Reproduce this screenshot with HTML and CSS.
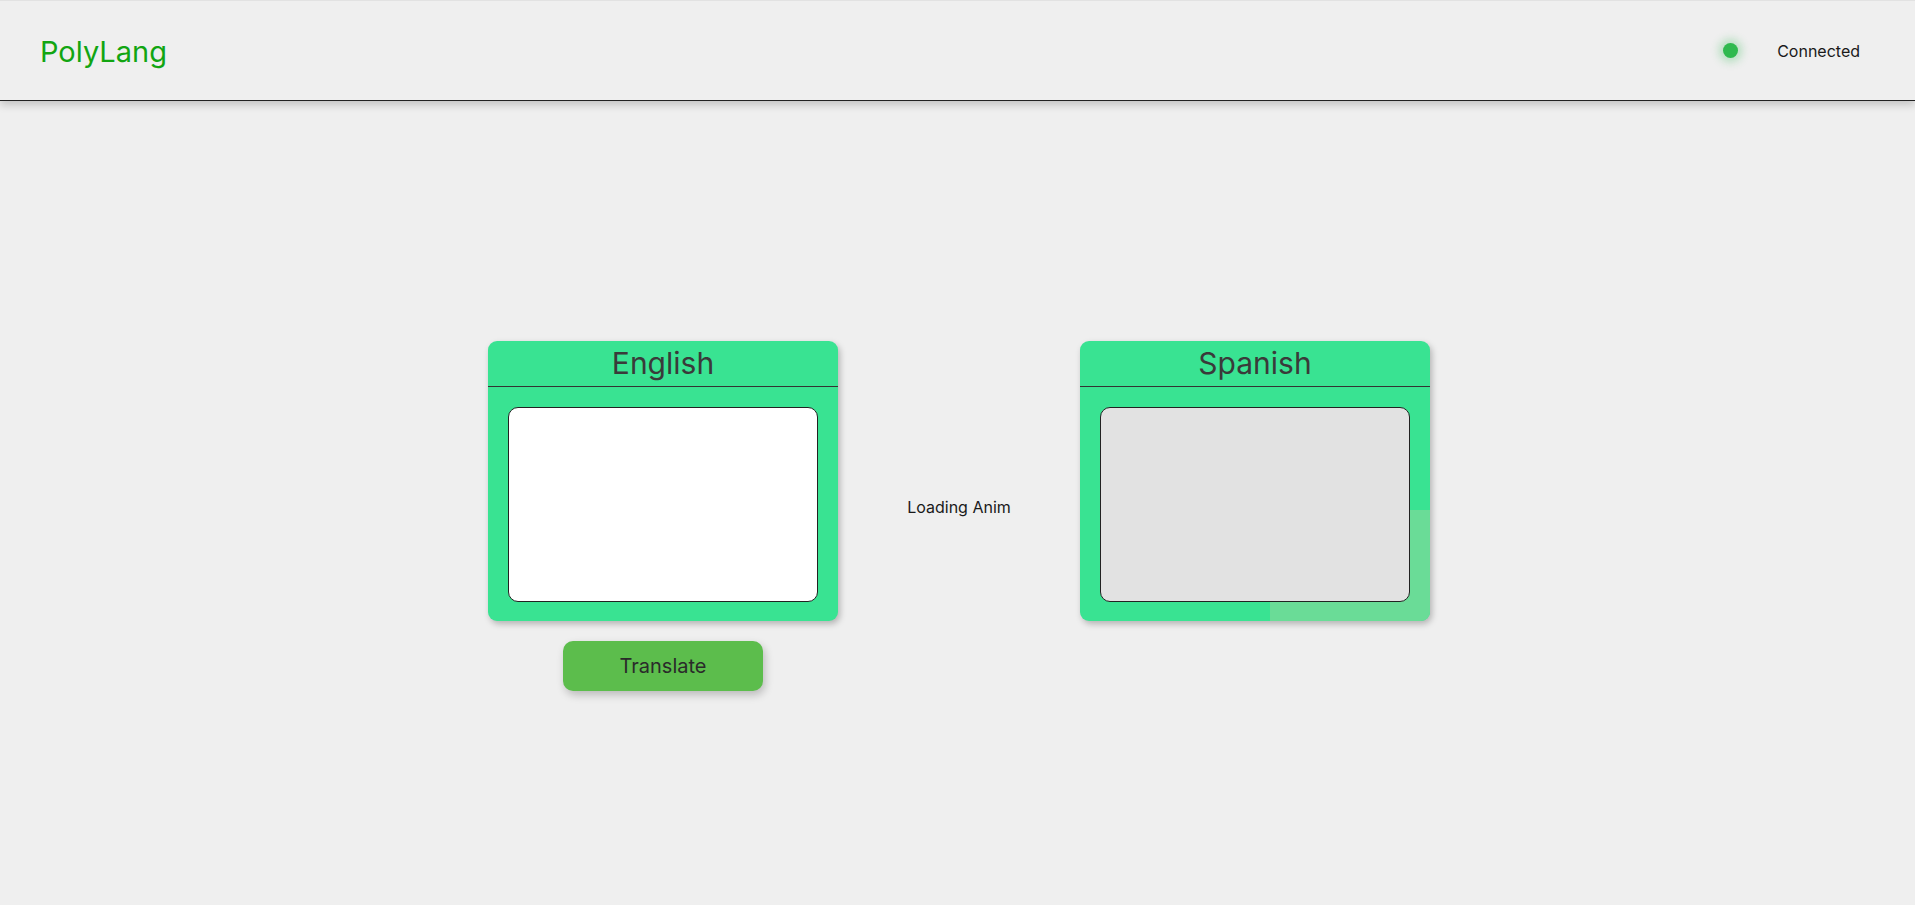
FILE: index.html
```html
<!DOCTYPE html>
<html lang="en">
<head>
<meta charset="utf-8">
<title>PolyLang</title>
<link rel="stylesheet" href="styles.css">
</head>
<body>
<header class="topbar">
  <div class="brand">PolyLang</div>
  <div class="status">
    <span class="status__dot"></span>
    <span class="status__label">Connected</span>
  </div>
</header>
<main class="stage">
  <div class="workspace">
    <div class="column">
      <section class="panel">
        <div class="panel__head">English</div>
        <div class="panel__body">
          <textarea class="panel__input"></textarea>
        </div>
      </section>
      <button class="translate">Translate</button>
    </div>
    <div class="loading">Loading Anim</div>
    <div class="column">
      <section class="panel panel--output">
        <div class="panel__head">Spanish</div>
        <div class="panel__body">
          <span class="panel__progress"></span>
          <textarea class="panel__input panel__input--readonly" readonly></textarea>
        </div>
      </section>
    </div>
  </div>
</main>
</body>
</html>
```
FILE: styles.css
```css
* { box-sizing: border-box; }
html, body {
  margin: 0;
  padding: 0;
  background: #efefef;
  font-family: Inter, "Noto Sans", sans-serif;
  color: #222;
}
body { height: 905px; overflow: hidden; }

.topbar {
  height: 101px;
  display: flex;
  align-items: center;
  justify-content: space-between;
  padding: 0 55px 0 40px;
  background: #efefef;
  border-top: 1px solid #e2e2e2;
  border-bottom: 1px solid #222;
  box-shadow: 0 4px 8px rgba(0, 0, 0, 0.18);
  position: relative;
  z-index: 2;
}
.brand {
  font-size: 29px;
  color: #12a512;
  line-height: 1;
  padding-top: 1px;
}
.status {
  display: flex;
  align-items: center;
  gap: 39px;
}
.status__dot {
  width: 15px;
  height: 15px;
  border-radius: 50%;
  background: #2fb94e;
  box-shadow: 0 0 8px 4px rgba(47, 185, 78, 0.3);
}
.status__label { font-size: 16px; color: #1a1a1a; }

.stage { padding-top: 240px; }
.workspace {
  display: flex;
  justify-content: center;
  align-items: flex-start;
  padding-left: 3px;
}
.column {
  display: flex;
  flex-direction: column;
  align-items: center;
  gap: 20px;
}
.loading {
  width: 242px;
  text-align: center;
  font-size: 16px;
  color: #1a1a1a;
  padding-top: 156px;
}

.panel {
  width: 350px;
  height: 280px;
  background: #39e392;
  border-radius: 9px;
  box-shadow: 2px 3px 6px rgba(0, 0, 0, 0.25);
  overflow: hidden;
  display: flex;
  flex-direction: column;
}
.panel__head {
  height: 46px;
  border-bottom: 1px solid #333;
  text-align: center;
  font-size: 30px;
  line-height: 44px;
  color: #3a3a3a;
}
.panel__body {
  flex: 1;
  position: relative;
  padding: 20px 20px 19px;
  display: flex;
}
.panel__input {
  position: relative;
  z-index: 1;
  flex: 1;
  margin: 0;
  border: 1px solid #222;
  border-radius: 10px;
  background: #fff;
  resize: none;
  font-family: Inter, sans-serif;
  font-size: 16px;
  outline: none;
}
.panel__input--readonly { background: #e2e2e2; }
.panel__progress {
  position: absolute;
  left: 190px;
  top: 123px;
  right: 0;
  bottom: 0;
  background: #6adc97;
}

.translate {
  width: 200px;
  height: 50px;
  border: none;
  border-radius: 10px;
  background: #5cbd4c;
  color: #2a2a2a;
  font-family: Inter, sans-serif;
  font-size: 20px;
  box-shadow: 2px 4px 8px rgba(0, 0, 0, 0.22);
  cursor: pointer;
}
```
